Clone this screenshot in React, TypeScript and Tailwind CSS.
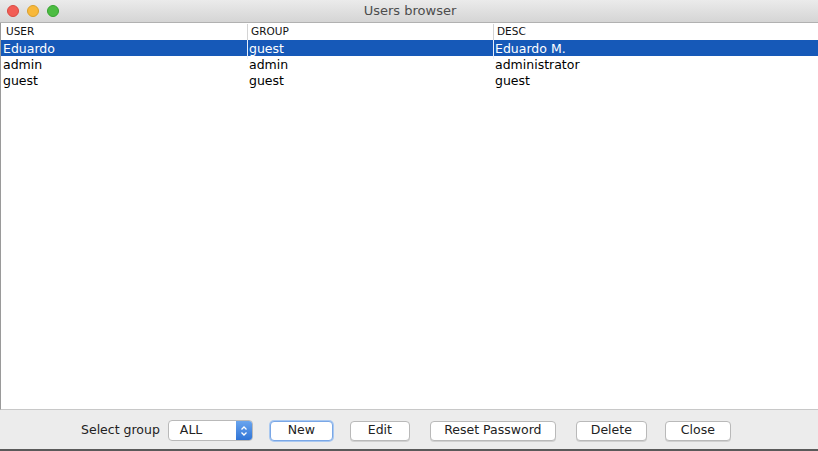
const rows = [
  { user: "Eduardo", group: "guest", desc: "Eduardo M." },
  { user: "admin", group: "admin", desc: "administrator" },
  { user: "guest", group: "guest", desc: "guest" },
];

const font = { fontFamily: '"DejaVu Sans", "Liberation Sans", sans-serif' };

function Btn({ label, w, focused }: { label: string; w: string; focused?: boolean }) {
  return (
    <button
      className={`h-[20px] ${w} rounded-[4px] bg-white text-[12.5px] text-[#222] leading-none border ${
        focused ? "border-[#7aa7e6] shadow-[0_0_0_1px_#a9c8f0]" : "border-[#b9b9b9] shadow-[0_1px_0_#d0d0d0]"
      }`}
    >
      {label}
    </button>
  );
}

export default function App() {
  return (
    <div className="w-[818px] h-[451px] flex flex-col bg-[#ececec] overflow-hidden" style={font}>
      {/* title bar */}
      <div className="relative h-[23px] shrink-0 flex items-center justify-center bg-gradient-to-b from-[#ebebeb] to-[#d5d5d5] border-b border-[#b1b1b1]">
        <div className="absolute left-[7px] top-[5px] flex gap-[8px]">
          <span className="w-[12px] h-[12px] rounded-full bg-[#f25d55] border border-[#d94a42]" />
          <span className="w-[12px] h-[12px] rounded-full bg-[#f8b83a] border border-[#dba02a]" />
          <span className="w-[12px] h-[12px] rounded-full bg-[#4cbc42] border border-[#35a32f]" />
        </div>
        <span className="text-[13px] text-[#4d4d4d] pl-[2px]">Users browser</span>
      </div>

      {/* table */}
      <div className="flex-1 bg-white border-l border-[#9a9a9a] border-b border-b-[#c8c8c8] text-[12.5px] text-black">
        <div className="grid grid-cols-[246px_246px_1fr] h-[17px] items-end text-[10.5px] text-[#111]">
          <div className="pl-[5px]">USER</div>
          <div className="pl-[3px] border-l border-[#d4d4d4]">GROUP</div>
          <div className="pl-[3px] border-l border-[#d4d4d4]">DESC</div>
        </div>
        <div>
          {rows.map((r, i) => (
            <div
              key={r.user}
              className={`grid grid-cols-[246px_246px_1fr] h-[16px] items-center ${
                i === 0 ? "bg-[#1659b8] text-white" : ""
              }`}
            >
              <div className="pl-[2px]">{r.user}</div>
              <div className={`pl-[1px] h-full flex items-center ${i === 0 ? "border-l border-[#e8eefa]" : "border-l border-transparent"}`}>{r.group}</div>
              <div className={`pl-[1px] h-full flex items-center ${i === 0 ? "border-l border-[#e8eefa]" : "border-l border-transparent"}`}>{r.desc}</div>
            </div>
          ))}
        </div>
      </div>

      {/* bottom bar */}
      <div className="h-[41px] shrink-0 flex items-center pt-[2px] pl-[81px] border-b-[2px] border-[#5a5a5a] text-[12.5px] text-[#222]">
        <span className="mr-[8px]">Select group</span>
        <div className="h-[21px] w-[85px] flex rounded-[4px] border border-[#b9b9b9] bg-white overflow-hidden">
          <span className="flex-1 pl-[11px] flex items-center">ALL</span>
          <span className="w-[16px] flex items-center justify-center bg-gradient-to-b from-[#6aa5ee] to-[#2f74d6]">
            <svg width="8" height="12" viewBox="0 0 8 12" fill="none" stroke="white" strokeWidth="1.3">
              <path d="M1.5 4.5 L4 2 L6.5 4.5" />
              <path d="M1.5 7.5 L4 10 L6.5 7.5" />
            </svg>
          </span>
        </div>
        <div className="ml-[17px]"><Btn label="New" w="w-[63px]" focused /></div>
        <div className="ml-[17px]"><Btn label="Edit" w="w-[60px]" /></div>
        <div className="ml-[20px]"><Btn label="Reset Password" w="w-[126px]" /></div>
        <div className="ml-[20px]"><Btn label="Delete" w="w-[71px]" /></div>
        <div className="ml-[18px]"><Btn label="Close" w="w-[66px]" /></div>
      </div>
    </div>
  );
}
